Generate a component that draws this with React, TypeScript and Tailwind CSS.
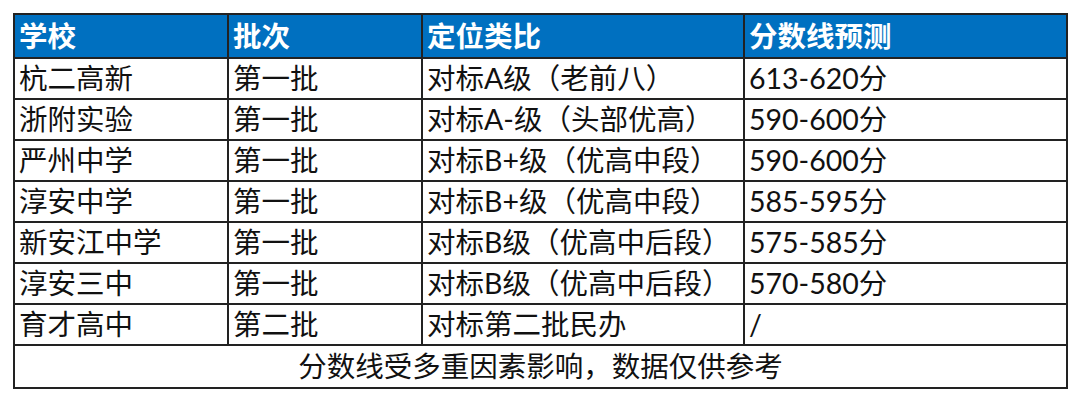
const rows = [
  ["杭二高新", "第一批", "对标A级（老前八）", "613-620分"],
  ["浙附实验", "第一批", "对标A-级（头部优高）", "590-600分"],
  ["严州中学", "第一批", "对标B+级（优高中段）", "590-600分"],
  ["淳安中学", "第一批", "对标B+级（优高中段）", "585-595分"],
  ["新安江中学", "第一批", "对标B级（优高中后段）", "575-585分"],
  ["淳安三中", "第一批", "对标B级（优高中后段）", "570-580分"],
  ["育才高中", "第二批", "对标第二批民办", "/"],
];

const heads = ["学校", "批次", "定位类比", "分数线预测"];

export default function App() {
  return (
    <div className="w-[1080px] h-[403px] bg-white pt-[13px] pl-[13px] font-['Lato','Noto_Sans_CJK_SC',sans-serif]">
      <table className="table-fixed border-collapse w-[1053px] text-[28.5px] leading-none text-[#111]">
        <colgroup>
          <col className="w-[214px]" />
          <col className="w-[194px]" />
          <col className="w-[322px]" />
          <col className="w-[323px]" />
        </colgroup>
        <thead>
          <tr className="h-[44px] bg-[#0070c0] text-white">
            {heads.map((h) => (
              <th key={h} className="border-2 border-[#222] px-[4px] text-left font-bold">
                {h}
              </th>
            ))}
          </tr>
        </thead>
        <tbody>
          {rows.map((r, i) => (
            <tr key={i} className="h-[41px]">
              {r.map((c, j) => (
                <td key={j} className="border-2 border-[#222] px-[4px] whitespace-nowrap">
                  {c}
                </td>
              ))}
            </tr>
          ))}
          <tr className="h-[43px]">
            <td colSpan={4} className="border-2 border-[#222] text-center">
              分数线受多重因素影响，数据仅供参考
            </td>
          </tr>
        </tbody>
      </table>
    </div>
  );
}
